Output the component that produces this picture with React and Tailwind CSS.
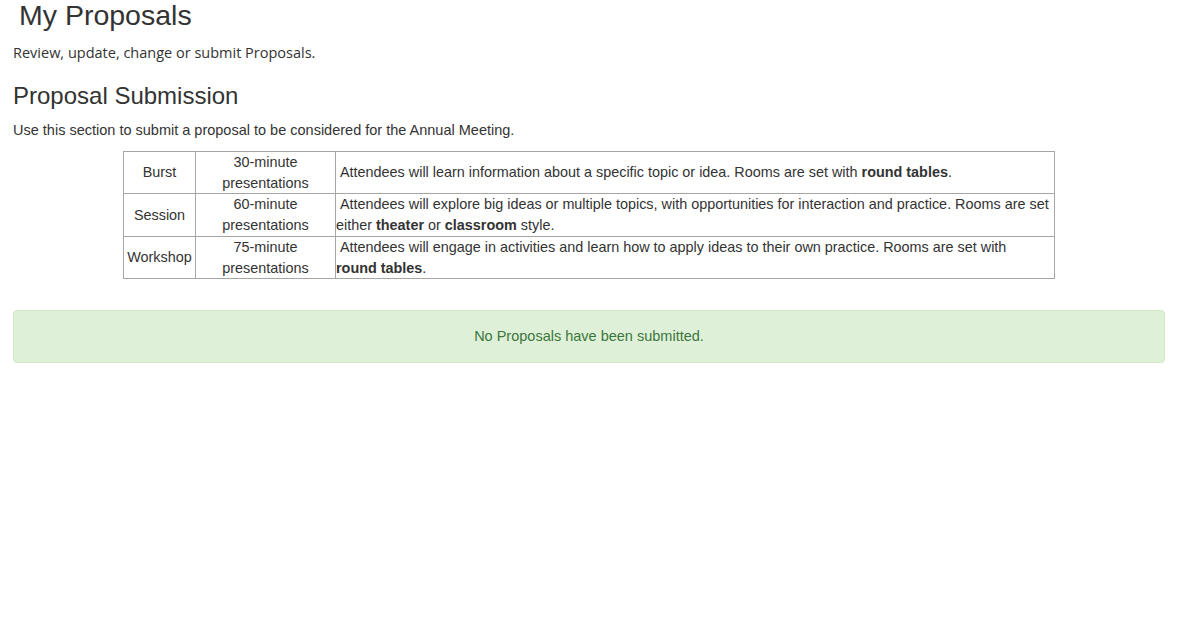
const formats = [
    {
        name: 'Burst',
        length: '30-minute',
        text: (
            <>
                {'\u00a0'}Attendees will learn information about a specific topic or idea. Rooms are set with <b>round{'\u00a0'}tables</b>.
            </>
        ),
    },
    {
        name: 'Session',
        length: '60-minute',
        text: (
            <>
                {'\u00a0'}Attendees will explore big ideas or multiple topics, with opportunities for interaction and practice. Rooms are set either <b>theater</b> or <b>classroom</b> style.
            </>
        ),
    },
    {
        name: 'Workshop',
        length: '75-minute',
        text: (
            <>
                {'\u00a0'}Attendees will engage in activities and learn how to apply ideas to their own practice. Rooms are set with <b>round{'\u00a0'}tables</b>.
            </>
        ),
    },
];

const App = () => {
    return (
        <div className="min-h-screen bg-white pl-[13px] pr-[35px] text-[#333] font-['Liberation_Sans',Arial,sans-serif]">
            <h1 className="pl-[6px] text-[28.5px] leading-[31px]">My Proposals</h1>
            <p className="mt-[11px] font-['Open_Sans',sans-serif] text-[14.5px] leading-[21px]">
                Review, update, change or submit Proposals.
            </p>

            <h3 className="mt-[20px] text-[24px] leading-[26px]">Proposal Submission</h3>
            <p className="mt-[11px] text-[14.5px] leading-[20px]">
                Use this section to submit a proposal to be considered for the Annual Meeting.
            </p>

            <table className="mx-auto mt-[11px] w-[932px] table-fixed border-collapse text-[14.4px] leading-[20.7px]">
                <colgroup>
                    <col className="w-[72px]" />
                    <col className="w-[140px]" />
                    <col />
                </colgroup>
                <tbody>
                    {formats.map((f) => (
                        <tr key={f.name}>
                            <td className="border border-[#a6a6a6] p-0 text-center align-middle">{f.name}</td>
                            <td className="border border-[#a6a6a6] p-0 text-center align-middle">
                                {f.length}
                                <br />
                                presentations
                            </td>
                            <td className="border border-[#a6a6a6] p-0 align-middle">{f.text}</td>
                        </tr>
                    ))}
                </tbody>
            </table>

            <div className="mt-[31px] rounded-[4px] border border-[#d6e9c6] bg-[#dff0d8] py-[15px] text-center text-[14.5px] leading-[21px] text-[#3c763d]">
                No Proposals have been submitted.
            </div>
        </div>
    );
};

export default App;
